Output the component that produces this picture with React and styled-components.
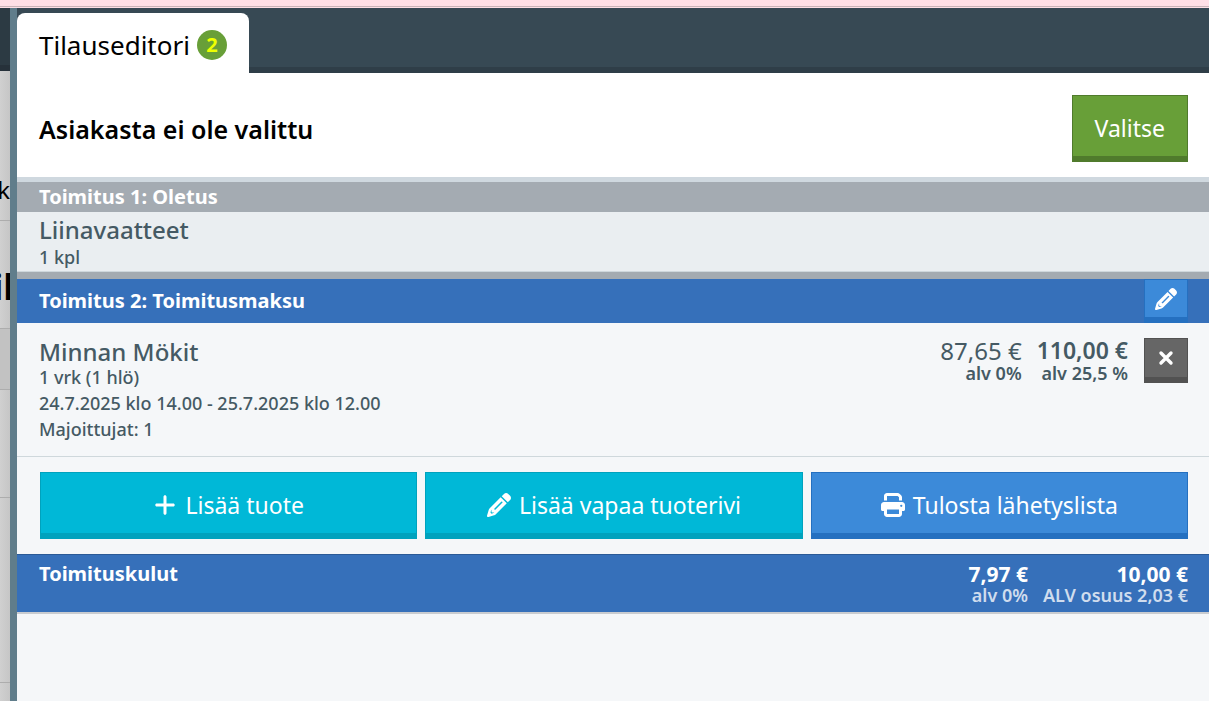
import React from 'react';
import styled, { createGlobalStyle } from 'styled-components';
import { FaPlus, FaPrint } from 'react-icons/fa6';

const deliveryRows = [
  '24.7.2025 klo 14.00 - 25.7.2025 klo 12.00',
  'Majoittujat: 1',
];

function PencilIcon({ size }) {
  return (
    <svg width={size} height={size} viewBox="0 0 512 512" aria-hidden="true">
      <path
        fill="currentColor"
        fillRule="evenodd"
        d="M421.7 220.3L188.5 453.4C178.1 463.8 165.2 471.5 151.1 475.6L30.8 511C22.4 513.5 13.2 511.2 7 505C.8 498.8-1.5 489.7 1 481.2L36.4 360.9C40.5 346.8 48.2 333.9 58.6 323.5L291.7 90.3L421.7 220.3ZM303 186L160 329a16 16 0 0 0 23 23L326 209a16 16 0 0 0-23-23ZM90 362l6-4v42c0 9 7 16 16 16h42l-4 6-52 18-24-24ZM492.7 58.7C517.7 83.7 517.7 124.3 492.7 149.3L444.3 197.7L314.3 67.7L362.7 19.3C387.7-5.7 428.3-5.7 453.3 19.3L492.7 58.7Z"
      />
    </svg>
  );
}

function CloseIcon() {
  return (
    <svg width="16" height="16" viewBox="0 0 16 16" aria-hidden="true">
      <path
        d="M3 3L13 13M13 3L3 13"
        stroke="currentColor"
        strokeWidth="3.4"
        strokeLinecap="round"
      />
    </svg>
  );
}

function App() {
  return (
    <>
      <GlobalStyle />
      <Page>
        <Banner />
        <Workspace>
          <Underlay aria-hidden="true">
            <UnderlayHeader />
            <UnderlayRow $height={150}>
              <UnderlayText>k</UnderlayText>
            </UnderlayRow>
            <UnderlayRow $height={108}>
              <UnderlayTitle>il</UnderlayTitle>
            </UnderlayRow>
            <UnderlayRow $height={61} $shaded />
            <UnderlayRow $height={108} />
            <UnderlayRow $height={185} />
          </Underlay>
          <Editor>
            <TabBar>
              <Tab>
                Tilauseditori
                <Badge>2</Badge>
              </Tab>
            </TabBar>
            <Customer>
              <CustomerName>Asiakasta ei ole valittu</CustomerName>
              <Button $color="green">Valitse</Button>
            </Customer>

            <Delivery>
              <DeliveryHeader>
                <DeliveryTitle>Toimitus 1: Oletus</DeliveryTitle>
              </DeliveryHeader>
              <CompactRow>
                <ProductName>Liinavaatteet</ProductName>
                <Detail>1 kpl</Detail>
              </CompactRow>
            </Delivery>

            <DeliveryHeader $active>
              <DeliveryTitle>Toimitus 2: Toimitusmaksu</DeliveryTitle>
              <IconButton $color="blue" aria-label="Muokkaa toimitusta">
                <PencilIcon size={22} />
              </IconButton>
            </DeliveryHeader>
            <ProductRow>
              <ProductInfo>
                <ProductName>Minnan Mökit</ProductName>
                <Quantity>1 vrk (1 hlö)</Quantity>
                {deliveryRows.map((row) => (
                  <Detail key={row}>{row}</Detail>
                ))}
              </ProductInfo>
              <Prices>
                <Price>
                  <Amount>87,65 €</Amount>
                  <Vat>alv 0%</Vat>
                </Price>
                <Price>
                  <Amount $strong>110,00 €</Amount>
                  <Vat>alv 25,5 %</Vat>
                </Price>
              </Prices>
              <IconButton $color="gray" aria-label="Poista tuote">
                <CloseIcon />
              </IconButton>
            </ProductRow>
            <Actions>
              <Button $color="cyan">
                <FaPlus size={24} />
                Lisää tuote
              </Button>
              <Button $color="cyan">
                <PencilIcon size={24} />
                Lisää vapaa tuoterivi
              </Button>
              <Button $color="blue">
                <FaPrint size={24} />
                Tulosta lähetyslista
              </Button>
            </Actions>
            <Costs>
              <DeliveryTitle>Toimituskulut</DeliveryTitle>
              <Prices>
                <Price>
                  <CostAmount>7,97 €</CostAmount>
                  <CostVat>alv 0%</CostVat>
                </Price>
                <Price>
                  <CostAmount>10,00 €</CostAmount>
                  <CostVat>ALV osuus 2,03 €</CostVat>
                </Price>
              </Prices>
            </Costs>
          </Editor>
        </Workspace>
      </Page>
    </>
  );
}

const palette = {
  green: { face: '#689f38', edge: '#507b2c' },
  cyan: { face: '#00b8d7', edge: '#00a2bd' },
  blue: { face: '#3c8ad9', edge: '#2570c0' },
  gray: { face: '#666666', edge: '#525252' },
};

const GlobalStyle = createGlobalStyle`
  * {
    box-sizing: border-box;
  }

  body {
    margin: 0;
    font-family: 'Noto Sans', 'Open Sans', sans-serif;
    color: #455a64;
  }

  button {
    font-family: inherit;
    cursor: pointer;
  }
`;

const Page = styled.div`
  min-height: 100vh;
  display: flex;
  flex-direction: column;
`;

const Banner = styled.div`
  height: 8px;
  background-color: #ffdfe6;
  background-image: linear-gradient(#c9b4b8, #c9b4b8);
  background-size: 100% 1px;
  background-position: 0 6px;
  background-repeat: no-repeat;
`;

const Workspace = styled.div`
  flex: 1;
  display: flex;
`;

const Underlay = styled.div`
  width: 10px;
  flex: none;
  overflow: hidden;
  color: #000;
  background: linear-gradient(90deg, #d0d0d0, #c6c6c6);
`;

const UnderlayHeader = styled.div`
  height: 63px;
  background: #2c3a43;
  border-bottom: 6px solid #26313a;
`;

const UnderlayRow = styled.div`
  height: ${(props) => props.$height}px;
  display: flex;
  align-items: center;
  justify-content: flex-end;
  border-bottom: 1px solid #adadad;
  background: ${(props) => (props.$shaded ? '#c2c2c2' : 'transparent')};
`;

const UnderlayText = styled.span`
  padding-top: 88px;
  font-size: 24px;
`;

const UnderlayTitle = styled.span`
  margin-right: -4px;
  padding-top: 24px;
  font-size: 36px;
  font-weight: 700;
`;

const Editor = styled.main`
  flex: 1;
  min-width: 0;
  position: relative;
  border-left: 7px solid #607d8b;
  background: #f5f7f9;
`;

const TabBar = styled.div`
  height: 65px;
  display: flex;
  align-items: flex-end;
  background: linear-gradient(#374954 calc(100% - 6px), #2f3e48 0);
`;

const Tab = styled.div`
  height: 60px;
  padding: 4px 22px 0;
  display: flex;
  align-items: center;
  gap: 7px;
  border-radius: 8px 8px 0 0;
  background: #fff;
  color: #000;
  font-size: 26px;
  line-height: 32px;
`;

const Badge = styled.span`
  width: 30px;
  height: 30px;
  border-radius: 50%;
  background: #689f38;
  color: #eeff00;
  font-size: 20px;
  font-weight: 700;
  line-height: 30px;
  text-align: center;
`;

const Customer = styled.section`
  padding: 22px 21px 15px 22px;
  display: flex;
  align-items: center;
  justify-content: space-between;
  border-bottom: 5px solid #cfd8df;
  background: #fff;
`;

const CustomerName = styled.h1`
  margin: 0;
  color: #000;
  font-size: 25px;
  font-weight: 600;
  line-height: 32px;
`;

const Button = styled.button`
  height: 67px;
  padding: 4px 22px 0;
  display: flex;
  align-items: center;
  justify-content: center;
  gap: 8px;
  border: 1px solid ${(props) => palette[props.$color].edge};
  border-bottom-width: 6px;
  background: ${(props) => palette[props.$color].face};
  color: #fff;
  font-size: 23px;
  white-space: nowrap;
`;

const IconButton = styled(Button)`
  width: 44px;
  height: 45px;
  padding: 0;
  flex: none;
`;

const Delivery = styled.section`
  border-bottom: 7px solid #a4abb1;
`;

const DeliveryHeader = styled.header`
  height: ${(props) => (props.$active ? '44px' : '30px')};
  padding: 0 21px 0 22px;
  display: flex;
  align-items: center;
  justify-content: space-between;
  background: ${(props) => (props.$active ? '#3670ba' : '#a4abb2')};

  ${IconButton} {
    height: 44px;
  }
`;

const DeliveryTitle = styled.h2`
  margin: 0;
  color: #fff;
  font-size: 20px;
  font-weight: 700;
  line-height: 30px;
`;

const CompactRow = styled.div`
  padding: 4px 22px 0;
  height: 60px;
  border-bottom: 1px solid #cfd8dc;
  background: #eaeef1;
`;

const ProductRow = styled.div`
  min-height: 134px;
  padding: 15px 21px 14px 22px;
  display: flex;
  align-items: flex-start;
  border-bottom: 1px solid #cfd8dc;
`;

const ProductInfo = styled.div`
  flex: 1;
`;

const ProductName = styled.h3`
  margin: 0;
  font-size: 24px;
  font-weight: 500;
  line-height: 28px;
`;

const Detail = styled.p`
  margin: 0;
  font-size: 18px;
  font-weight: 500;
  line-height: 26px;
`;

const Quantity = styled(Detail)`
  padding-bottom: 2px;
  line-height: 22px;
`;

const Prices = styled.div`
  display: flex;
  gap: 15px;
`;

const Price = styled.div`
  display: flex;
  flex-direction: column;
  align-items: flex-end;
  white-space: nowrap;

  ${ProductRow} &:last-child {
    margin-right: 16px;
  }
`;

const Amount = styled.span`
  font-size: ${(props) => (props.$strong ? '23px' : '24px')};
  font-weight: ${(props) => (props.$strong ? 600 : 400)};
  line-height: 25px;
`;

const Vat = styled.span`
  font-size: 18px;
  font-weight: 600;
  line-height: 20px;
`;

const Actions = styled.div`
  padding: 15px 21px 15px 23px;
  display: grid;
  grid-template-columns: repeat(3, 1fr);
  gap: 8px;
`;

const Costs = styled.footer`
  height: 58px;
  padding: 4px 21px 0 22px;
  display: flex;
  align-items: flex-start;
  justify-content: space-between;
  border-top: 1px solid #2b5a96;
  background: #3670ba;
  box-shadow: 0 2px 0 #c9ccd0;
  color: #fff;
`;

const CostAmount = styled.span`
  padding-top: 4px;
  font-size: 21px;
  font-weight: 700;
  line-height: 22px;
`;

const CostVat = styled(Vat)`
  color: #d0ddee;
`;

export default App;
